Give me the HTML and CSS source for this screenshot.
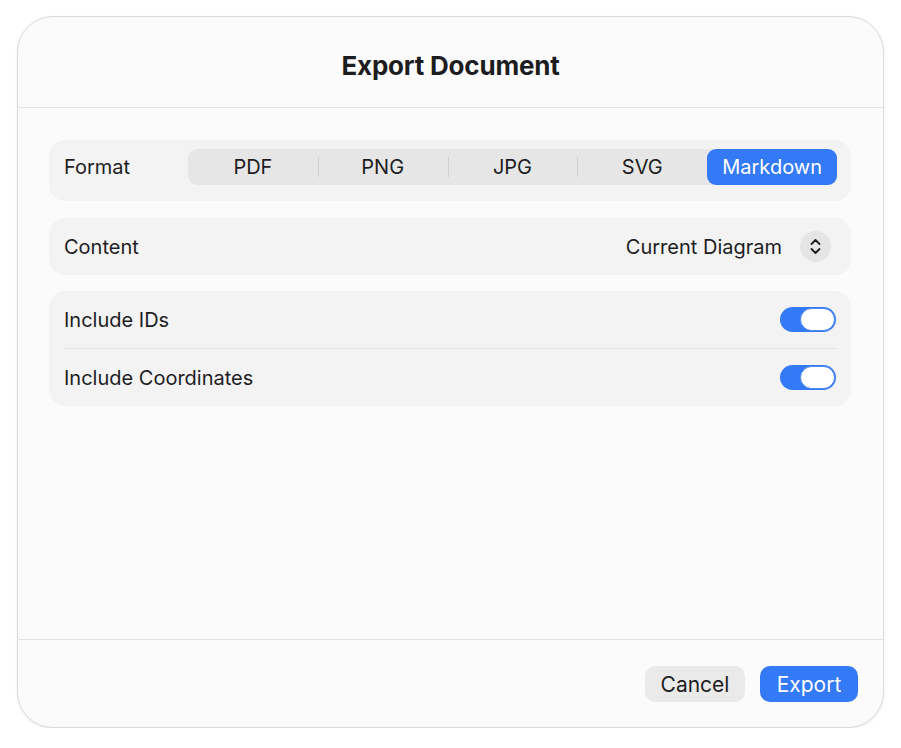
FILE: index.html
```html
<!DOCTYPE html>
<html lang="en">
<head>
<meta charset="UTF-8" />
<meta name="viewport" content="width=device-width, initial-scale=1" />
<title>Export Document</title>
<link rel="stylesheet" href="styles.css">
</head>
<body>

<div class="dialog">
  <header class="dialog-head">
    <h1>Export Document</h1>
  </header>

  <main class="dialog-body">
    <section class="card row format-row">
      <span class="label">Format</span>
      <div class="segmented">
        <button class="seg">PDF</button>
        <button class="seg">PNG</button>
        <button class="seg">JPG</button>
        <button class="seg">SVG</button>
        <button class="seg active">Markdown</button>
      </div>
    </section>

    <section class="card row content-row">
      <span class="label">Content</span>
      <div class="picker">
        <span class="picker-value">Current Diagram</span>
        <span class="stepper">
          <svg width="13" height="17" viewBox="0 0 13 17" fill="none" stroke="#1d1d1f" stroke-width="1.8" stroke-linecap="round" stroke-linejoin="round">
            <path d="M2.5 6 L6.5 2 L10.5 6" />
            <path d="M2.5 11 L6.5 15 L10.5 11" />
          </svg>
        </span>
      </div>
    </section>

    <section class="card list">
      <div class="list-row">
        <span class="label">Include IDs</span>
        <span class="toggle on"><span class="knob"></span></span>
      </div>
      <div class="list-row">
        <span class="label">Include Coordinates</span>
        <span class="toggle on"><span class="knob"></span></span>
      </div>
    </section>
  </main>

  <footer class="dialog-foot">
    <button class="btn btn-cancel">Cancel</button>
    <button class="btn btn-primary">Export</button>
  </footer>
</div>

</body>
</html>
```

FILE: styles.css
```css
/* page */
body, html {
  margin: 0; padding: 0;
  background: #ffffff;
  font-family: Inter, 'Noto Sans', sans-serif;
  color: #1d1d1f;
}

/* dialog window */
.dialog {
  box-sizing: border-box;
  width: 867px;
  height: 712px;
  margin: 16px 0 0 17px;
  display: flex;
  flex-direction: column;
  background: #fcfbfc;
  border: 1px solid #dcdadc;
  border-radius: 36px;
  box-shadow: 0 1px 3px rgba(0, 0, 0, 0.08);
  overflow: hidden;
}

.dialog-head {
  height: 90px;
  display: flex;
  align-items: center;
  justify-content: center;
  border-bottom: 1px solid #e3e1e3;
}
.dialog-head h1 {
  margin: 0;
  font-size: 26px;
  font-weight: 700;
  letter-spacing: -0.2px;
  padding-top: 6px;
}

.dialog-body {
  flex: 1;
  padding: 32px 32px 0 31px;
  display: flex;
  flex-direction: column;
  gap: 16px;
}

.card {
  background: #f4f3f4;
  border-radius: 16px;
}
.row {
  display: flex;
  align-items: center;
  justify-content: space-between;
  padding: 0 14px 0 15px;
}
.label {
  font-size: 20px;
}

/* format segmented control */
.format-row {
  height: 61px;
  box-sizing: border-box;
  padding-top: 9px;
  padding-bottom: 16px;
  align-items: center;
}
.segmented {
  width: 649px;
  height: 36px;
  display: flex;
  background: #e7e6e7;
  border-radius: 9px;
}
.seg {
  flex: 1;
  position: relative;
  border: none;
  background: none;
  font: inherit;
  font-size: 20px;
  color: #1d1d1f;
  padding: 0;
  border-radius: 9px;
}
.seg + .seg::before {
  content: '';
  position: absolute;
  left: 0; top: 8px;
  width: 1px; height: 20px;
  background: #d0cfd0;
}
.seg.active {
  background: #3479f5;
  color: #ffffff;
}
.seg.active::before { display: none; }

/* content picker */
.content-row {
  height: 57px;
  margin-top: 1px;
}
.picker {
  display: flex;
  align-items: center;
  gap: 18px;
  padding-right: 6px;
}
.picker-value {
  font-size: 20px;
}
.stepper {
  width: 31px;
  height: 31px;
  border-radius: 50%;
  background: #e6e5e6;
  display: flex;
  align-items: center;
  justify-content: center;
}

/* toggles list */
.list {
  padding: 0 15px;
}
.list-row {
  height: 57px;
  display: flex;
  align-items: center;
  justify-content: space-between;
}
.list-row + .list-row {
  border-top: 1px solid #e4e3e4;
}
.toggle {
  box-sizing: border-box;
  width: 56px;
  height: 25px;
  border-radius: 13px;
  background: #3479f5;
  display: flex;
  align-items: center;
  justify-content: flex-end;
  padding: 1px;
}
.knob {
  box-sizing: border-box;
  width: 35px;
  height: 23px;
  border-radius: 12px;
  background: #ffffff;
  border: 1px solid #4a86f0;
}

/* footer buttons */
.dialog-foot {
  height: 88px;
  border-top: 1px solid #e3e1e3;
  display: flex;
  justify-content: flex-end;
  align-items: flex-start;
  gap: 15px;
  padding: 26px 25px 0 0;
  box-sizing: border-box;
}
.btn {
  height: 36px;
  border: none;
  border-radius: 10px;
  font: inherit;
  font-size: 21px;
  padding: 0;
}
.btn-cancel {
  width: 100px;
  background: #ebeaeb;
  color: #1d1d1f;
}
.btn-primary {
  width: 98px;
  background: #3479f5;
  color: #ffffff;
}
```
